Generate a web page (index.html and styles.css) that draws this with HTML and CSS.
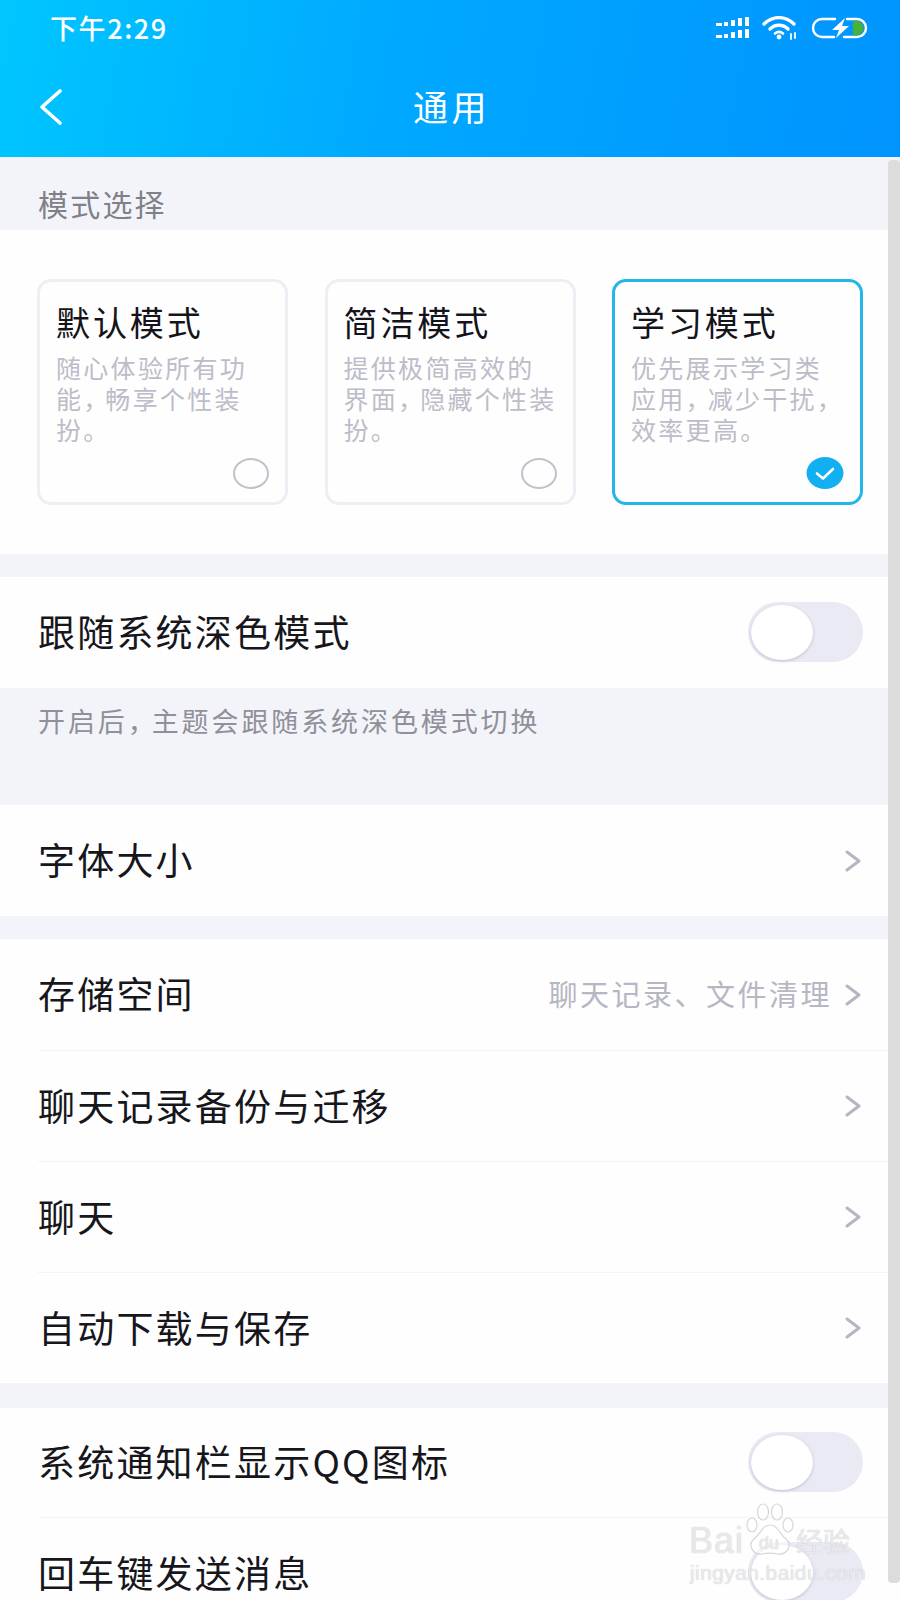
FILE: index.html
```html
<!DOCTYPE html>
<html lang="zh-CN">
<head>
<meta charset="UTF-8">
<meta name="viewport" content="width=device-width, initial-scale=1.0">
<title>通用</title>
<link rel="stylesheet" href="styles.css">
</head>
<body>
    <!-- 顶部 -->
    <div class="header">
        <div class="status-bar">
            <span class="time">下午2:29</span>
            <div class="status-icons">
                <svg class="signal" width="36" height="24" viewBox="0 0 36 24" fill="#fff">
                    <rect x="1" y="7" width="6" height="3"/><rect x="9" y="6" width="4" height="4"/><rect x="16" y="4" width="4" height="6"/><rect x="23" y="2" width="4" height="8"/><rect x="30" y="1" width="4" height="9"/>
                    <rect x="1" y="19" width="6" height="3"/><rect x="9" y="18" width="4" height="4"/><rect x="16" y="16" width="4" height="6"/><rect x="23" y="14" width="4" height="8"/><rect x="30" y="13" width="4" height="9"/>
                </svg>
                <svg class="wifi" width="37" height="24" viewBox="0 0 37 24" fill="none" stroke="#fff" stroke-width="3.4" stroke-linecap="round">
                    <path d="M2 8 C11 -0.5 23 -0.5 32 8"/>
                    <path d="M8 13 C13 8 21 8 26 13"/>
                    <path d="M13 17.5 C15.5 15.5 18.5 15.5 21 17.5" stroke-width="2.6"/>
                    <circle cx="17" cy="21" r="2.4" fill="#fff" stroke="none"/>
                    <path d="M29 18 V23 M33 17 V22" stroke-width="1.8"/>
                </svg>
                <svg class="battery" width="58" height="22" viewBox="0 0 58 22" fill="none">
                    <path d="M25 2 H12 A9 9 0 0 0 12 20 H24 M37 2 H47 A9 9 0 0 1 47 20 H34" stroke="#fff" stroke-width="2.4" stroke-linecap="round"/>
                    <path d="M43 3.5 H46 A7.5 7.5 0 0 1 46 18.5 H43 Z" fill="#4caf35"/>
                    <path d="M35 1 L22 13 H29 L26 21 L39 9 H32 Z" fill="#fff"/>
                </svg>
            </div>
        </div>
        <div class="nav-bar">
            <svg class="back" width="24" height="36" viewBox="0 0 24 36" fill="none" stroke="#fff" stroke-width="3.6" stroke-linecap="round" stroke-linejoin="round">
                <path d="M21 2 L3 18 L21 34"/>
            </svg>
            <span class="nav-title">通用</span>
        </div>
    </div>

    <!-- 模式选择 -->
    <div class="section-label">模式选择</div>
    <div class="modes">
        <div class="mode-card">
            <div class="mode-title">默认模式</div>
            <div class="mode-desc">随心体验所有功<br>能<span class="comma">，</span>畅享个性装<br>扮。</div>
            <span class="radio"></span>
        </div>
        <div class="mode-card">
            <div class="mode-title">简洁模式</div>
            <div class="mode-desc">提供极简高效的<br>界面<span class="comma">，</span>隐藏个性装<br>扮。</div>
            <span class="radio"></span>
        </div>
        <div class="mode-card selected">
            <div class="mode-title">学习模式</div>
            <div class="mode-desc">优先展示学习类<br>应用<span class="comma">，</span>减少干扰<span class="comma">，</span><br>效率更高。</div>
            <svg class="radio-on" width="38" height="32" viewBox="0 0 38 32">
                <ellipse cx="19" cy="16" rx="18.5" ry="16" fill="#12b0f0"/>
                <path d="M11 16.5 L17 21.5 L27 12" fill="none" stroke="#fff" stroke-width="2.6" stroke-linecap="round" stroke-linejoin="round"/>
            </svg>
        </div>
    </div>

    <div class="group gap">
        <div class="row">
            <span class="row-text">跟随系统深色模式</span>
            <span class="toggle"><span class="knob"></span></span>
        </div>
    </div>
    <div class="hint">开启后<span class="comma">，</span>主题会跟随系统深色模式切换</div>

    <div class="group">
        <div class="row">
            <span class="row-text">字体大小</span>
            <svg class="chevron" width="18" height="24" viewBox="0 0 18 24" fill="none" stroke="#b4b6c2" stroke-width="3" stroke-linecap="round" stroke-linejoin="round"><path d="M3 3 L15 12 L3 21"/></svg>
        </div>
    </div>

    <div class="group gap">
        <div class="row">
            <span class="row-text">存储空间</span>
            <span class="row-value">聊天记录、文件清理</span>
            <svg class="chevron" width="18" height="24" viewBox="0 0 18 24" fill="none" stroke="#b4b6c2" stroke-width="3" stroke-linecap="round" stroke-linejoin="round"><path d="M3 3 L15 12 L3 21"/></svg>
        </div>
        <div class="row">
            <span class="row-text">聊天记录备份与迁移</span>
            <svg class="chevron" width="18" height="24" viewBox="0 0 18 24" fill="none" stroke="#b4b6c2" stroke-width="3" stroke-linecap="round" stroke-linejoin="round"><path d="M3 3 L15 12 L3 21"/></svg>
        </div>
        <div class="row">
            <span class="row-text">聊天</span>
            <svg class="chevron" width="18" height="24" viewBox="0 0 18 24" fill="none" stroke="#b4b6c2" stroke-width="3" stroke-linecap="round" stroke-linejoin="round"><path d="M3 3 L15 12 L3 21"/></svg>
        </div>
        <div class="row">
            <span class="row-text">自动下载与保存</span>
            <svg class="chevron" width="18" height="24" viewBox="0 0 18 24" fill="none" stroke="#b4b6c2" stroke-width="3" stroke-linecap="round" stroke-linejoin="round"><path d="M3 3 L15 12 L3 21"/></svg>
        </div>
    </div>

    <div class="group gap-last">
        <div class="row">
            <span class="row-text">系统通知栏显示QQ图标</span>
            <span class="toggle"><span class="knob"></span></span>
        </div>
        <div class="row">
            <span class="row-text">回车键发送消息</span>
            <span class="toggle"><span class="knob"></span></span>
        </div>
    </div>

    <!-- 滚动条 -->
    <div class="scrollbar"></div>

    <!-- 水印 -->
    <div class="watermark">
        <svg class="paw" width="50" height="54" viewBox="0 0 50 54" fill="rgba(255,255,255,.55)" stroke="#d6d6dc" stroke-width="1.2">
            <ellipse cx="7" cy="22" rx="5" ry="7"/>
            <ellipse cx="18" cy="9" rx="5.5" ry="8"/>
            <ellipse cx="32" cy="9" rx="5.5" ry="8"/>
            <ellipse cx="43" cy="22" rx="5" ry="7"/>
            <path d="M25 22 C33 22 34 31 41 36 C48 42 42 52 33 51 C28 50 22 50 17 51 C8 52 2 42 9 36 C16 31 17 22 25 22 Z"/>
        </svg>
        <span class="wm-bai">Bai</span>
        <span class="wm-du">du</span>
        <span class="wm-jy">经验</span>
        <span class="wm-url">jingyan.baidu.com</span>
    </div>
</body>
</html>
```

FILE: styles.css
```css
body {
    font-family: "Noto Sans CJK SC", "Noto Sans", sans-serif;
    background-color: #f3f4f9;
    margin: 0;
    height: 1600px;
    overflow: hidden;
    position: relative;
    color: #16161c;
}
.header {
    height: 157px;
    background: linear-gradient(100deg, #00c6ff 0%, #00a8ff 45%, #0094ff 100%);
    color: #ffffff;
}
.status-bar {
    height: 56px;
    padding: 0 32px 0 50px;
    display: flex;
    align-items: center;
    justify-content: space-between;
}
.time {
    font-size: 27px;
    font-weight: 500;
    letter-spacing: 1.6px;
    margin-top: -2px;
}
.status-icons {
    display: flex;
    align-items: center;
    gap: 11px;
}
.nav-bar {
    height: 101px;
    position: relative;
    display: flex;
    align-items: center;
    justify-content: center;
    padding-bottom: 2px;
    box-sizing: border-box;
}
.back {
    position: absolute;
    left: 39px;
    top: 33px;
}
.nav-title {
    font-size: 35px;
    letter-spacing: 3.5px;
    margin-left: 3px;
}
.section-label {
    height: 73px;
    box-sizing: border-box;
    padding: 25px 0 0 38px;
    font-size: 30px;
    line-height: 42px;
    letter-spacing: 2.2px;
    color: #808088;
}
.modes {
    height: 324px;
    box-sizing: border-box;
    padding: 49px 0 0 37px;
    background-color: #fefefe;
    display: flex;
    gap: 36.5px;
}
.mode-card {
    width: 251px;
    height: 226px;
    box-sizing: border-box;
    border: 3px solid #eeeef5;
    border-radius: 14px;
    padding: 17px 16px 13px 16px;
    display: flex;
    flex-direction: column;
}
.mode-card.selected {
    border-color: #25b6e8;
}
.mode-title {
    font-size: 34px;
    line-height: 46px;
    letter-spacing: 2.9px;
    color: #14141a;
}
.mode-desc {
    font-size: 25px;
    line-height: 31px;
    letter-spacing: 2.3px;
    color: #bcbdc8;
    margin-top: 7px;
    white-space: nowrap;
}
.comma {
    letter-spacing: -3px;
}
.radio {
    margin-top: auto;
    align-self: flex-end;
    width: 36px;
    height: 31px;
    box-sizing: border-box;
    border: 2px solid #c0c2cb;
    border-radius: 50%;
}
.radio-on {
    margin-top: auto;
    align-self: flex-end;
}
.group {
    background-color: #fefefe;
}
.gap {
    margin-top: 23px;
}
.gap-last {
    margin-top: 25px;
}
.gap-last .row:first-child {
    height: 109px;
}
.row {
    height: 111px;
    box-sizing: border-box;
    margin-left: 38px;
    padding-right: 37px;
    display: flex;
    align-items: center;
    position: relative;
}
.row + .row {
    border-top: 1px solid #f3f3f9;
}
.row-text {
    font-size: 37px;
    letter-spacing: 2.2px;
    flex: 1;
    margin-top: -3px;
}
.row-value {
    font-size: 29px;
    letter-spacing: 2.5px;
    color: #b6b7c2;
    margin-right: 12px;
    margin-top: -3px;
}
.chevron {
    display: block;
    margin-right: 1px;
}
.toggle {
    width: 115px;
    height: 60px;
    border-radius: 30px;
    background-color: #e9eaf4;
    position: relative;
    margin-top: -2px;
}
.knob {
    position: absolute;
    left: 3px;
    top: 3px;
    width: 62px;
    height: 55px;
    border-radius: 50%;
    background-color: #ffffff;
    box-shadow: 0 1px 3px rgba(150, 150, 175, .5);
}
.hint {
    height: 117px;
    box-sizing: border-box;
    padding: 13px 0 0 38px;
    font-size: 27px;
    line-height: 40px;
    letter-spacing: 2.9px;
    color: #8f9099;
}
.scrollbar {
    position: absolute;
    right: 0;
    top: 160px;
    width: 12px;
    height: 1423px;
    background-color: #dcdcdc;
    border-radius: 4px;
}
.watermark {
    position: absolute;
    left: 688px;
    top: 1500px;
    width: 170px;
    height: 84px;
    color: rgba(255, 255, 255, .7);
    text-shadow: 0 0 1px #b4b4bc;
}
.paw {
    position: absolute;
    left: 57px;
    top: 3px;
}
.wm-bai, .wm-du, .wm-jy, .wm-url {
    position: absolute;
    white-space: nowrap;
    font-family: "Liberation Sans", "Noto Sans CJK SC", sans-serif;
}
.wm-bai {
    left: 1px;
    top: 21px;
    font-size: 36px;
    line-height: 40px;
    letter-spacing: 1px;
}
.wm-du {
    left: 71px;
    top: 33px;
    font-size: 18px;
    line-height: 20px;
}
.wm-jy {
    left: 108px;
    top: 27px;
    font-size: 27px;
    line-height: 32px;
}
.wm-url {
    left: 2px;
    top: 61px;
    font-size: 21px;
    line-height: 24px;
    letter-spacing: .4px;
}
```
